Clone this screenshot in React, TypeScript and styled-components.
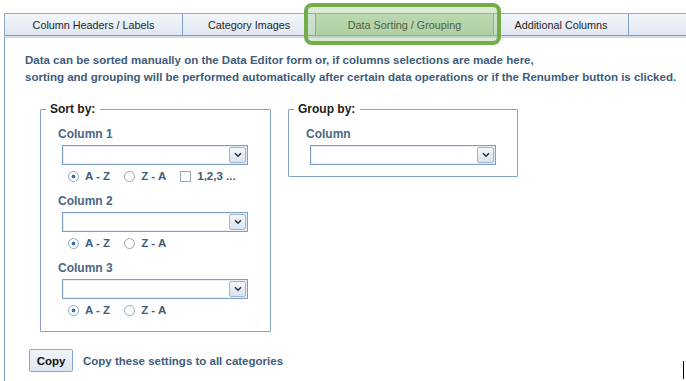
import React from 'react'
import styled, { createGlobalStyle } from 'styled-components'

const GlobalStyle = createGlobalStyle`
    html, body {
        margin: 0;
        padding: 0;
        background: #ffffff;
        font-family: "Liberation Sans", Arial, sans-serif;
    }
`

const tabs = [
    { label: 'Column Headers / Labels', width: 178 },
    { label: 'Category Images', width: 133 },
    { label: 'Data Sorting / Grouping', width: 178, active: true },
    { label: 'Additional Columns', width: 135 },
]

const SortBlock: React.FC<{ title: string; numbered?: boolean }> = ({ title, numbered }) => (
    <Block>
        <FieldLabel>{title}</FieldLabel>
        <Dropdown />
        <Options>
            <Option>
                <Radio $checked />
                A - Z
            </Option>
            <Option>
                <Radio />
                Z - A
            </Option>
            {numbered && (
                <Option>
                    <Check />
                    1,2,3 ...
                </Option>
            )}
        </Options>
    </Block>
)

const Dropdown: React.FC = () => (
    <SelectBox>
        <ArrowButton>
            <svg width='8' height='6' viewBox='0 0 8 6'>
                <path d='M1 1.2 L4 4.2 L7 1.2' fill='none' stroke='#2b3440' strokeWidth='1.6' />
            </svg>
        </ArrowButton>
    </SelectBox>
)

export default function App() {
    return (
        <>
            <GlobalStyle />
            <Frame>
                <TabBar>
                    {tabs.map((tab) => (
                        <Tab key={tab.label} $width={tab.width} $active={tab.active}>
                            {tab.label}
                        </Tab>
                    ))}
                </TabBar>
                <Highlight />
                <Panel>
                    <Intro>
                        Data can be sorted manually on the Data Editor form or, if columns selections are made here,
                        <br />
                        sorting and grouping will be performed automatically after certain data operations or if the Renumber button is clicked.
                    </Intro>
                    <Boxes>
                        <Box $width={231} $bottom={3}>
                            <Legend>Sort by:</Legend>
                            <SortBlock title='Column 1' numbered />
                            <SortBlock title='Column 2' />
                            <SortBlock title='Column 3' />
                        </Box>
                        <Box $width={230} $bottom={0}>
                            <Legend>Group by:</Legend>
                            <Block>
                                <FieldLabel>Column</FieldLabel>
                                <Dropdown />
                            </Block>
                        </Box>
                    </Boxes>
                    <Footer>
                        <CopyButton>Copy</CopyButton>
                        <FooterText>Copy these settings to all categories</FooterText>
                    </Footer>
                </Panel>
                <Caret />
            </Frame>
        </>
    )
}

const Frame = styled.div`
    position: relative;
    width: 686px;
    height: 381px;
    overflow: hidden;
    padding: 13px 0 0 4px;
    box-sizing: border-box;
`

const TabBar = styled.div`
    display: flex;
    height: 21px;
    border-top: 1px solid #8eaad0;
    border-left: 1px solid #8eaad0;
    border-bottom: 1px solid #7f9fc8;
    background: linear-gradient(#f3f6fb, #dfe7f2);
`

const Tab = styled.div<{ $width: number; $active?: boolean }>`
    width: ${({ $width }) => $width}px;
    flex: none;
    display: flex;
    align-items: center;
    justify-content: center;
    box-sizing: border-box;
    border-right: 1px solid #7f9fc8;
    font-size: 10.8px;
    color: #1f1f1f;
    background: ${({ $active }) => ($active ? 'linear-gradient(#cfe3c9, #bfd8b7)' : 'transparent')};
`

const Highlight = styled.div`
    position: absolute;
    left: 304px;
    top: 3px;
    width: 197px;
    height: 42px;
    box-sizing: border-box;
    border: 4px solid #72ad4a;
    border-radius: 8px;
    background: rgba(150, 196, 130, 0.35);
`

const Panel = styled.div`
    height: 345px;
    box-sizing: border-box;
    border-left: 1px solid #7f9fc8;
    border-top: 2px solid #d3dde9;
    padding: 14px 0 0 20px;
`

const Intro = styled.p`
    margin: 0;
    font-size: 11.5px;
    font-weight: bold;
    line-height: 17px;
    color: #3d5b7a;
    white-space: nowrap;
`

const Boxes = styled.div`
    display: flex;
    align-items: flex-start;
    gap: 17px;
    margin: 16px 0 0 15px;
`

const Box = styled.fieldset<{ $width: number; $bottom: number }>`
    width: ${({ $width }) => $width}px;
    box-sizing: border-box;
    margin: 0;
    padding: 11px 0 ${({ $bottom }) => $bottom}px 4px;
    border: 1px solid #85a4c8;
    border-radius: 1px;
`

const Legend = styled.legend`
    margin-left: 1px;
    padding: 0 5px 0 4px;
    font-size: 12px;
    font-weight: bold;
    line-height: 14px;
    color: #1c1c1c;
`

const Block = styled.div`
    display: flex;
    flex-direction: column;
    padding-left: 13px;
    margin-bottom: 11px;
`

const FieldLabel = styled.div`
    font-size: 12px;
    font-weight: bold;
    line-height: 14px;
    color: #4a6784;
`

const SelectBox = styled.div`
    width: 186px;
    height: 20px;
    margin: 4px 0 0 4px;
    box-sizing: border-box;
    display: flex;
    justify-content: flex-end;
    align-items: center;
    padding-right: 1px;
    background: #ffffff;
    border: 1px solid #7f9ec4;
    box-shadow: inset 0 0 0 1px #e6edf6;
`

const ArrowButton = styled.div`
    width: 17px;
    height: 16px;
    box-sizing: border-box;
    display: flex;
    align-items: center;
    justify-content: center;
    border: 1px solid #9fb4cd;
    border-radius: 2px;
    background: linear-gradient(#f4f7fb, #d9e3ef);
`

const Options = styled.div`
    display: flex;
    align-items: center;
    gap: 14px;
    height: 14px;
    margin: 4px 0 0 10px;
`

const Option = styled.label`
    display: flex;
    align-items: center;
    gap: 6px;
    font-size: 11.5px;
    font-weight: bold;
    color: #3d5b7a;
    white-space: nowrap;
`

const Radio = styled.span<{ $checked?: boolean }>`
    width: 11px;
    height: 11px;
    box-sizing: border-box;
    border-radius: 50%;
    border: 1px solid #93a6bd;
    background: ${({ $checked }) =>
        $checked ? 'radial-gradient(circle, #3a6fae 0 1.7px, #ffffff 2.2px)' : '#ffffff'};
`

const Check = styled.span`
    width: 11px;
    height: 11px;
    box-sizing: border-box;
    border: 1px solid #93a6bd;
    background: #ffffff;
`

const Footer = styled.div`
    display: flex;
    align-items: center;
    gap: 10px;
    margin: 17px 0 0 4px;
`

const CopyButton = styled.button`
    width: 44px;
    height: 23px;
    padding: 0;
    font-family: "Liberation Sans", Arial, sans-serif;
    font-size: 11.5px;
    font-weight: bold;
    color: #111111;
    border: 1px solid #87a6cc;
    border-radius: 2px;
    background: linear-gradient(#f1f5fa, #dde6f1);
`

const FooterText = styled.span`
    font-size: 11.5px;
    font-weight: bold;
    color: #3d5b7a;
`

const Caret = styled.div`
    position: absolute;
    left: 683px;
    top: 361px;
    width: 1px;
    height: 18px;
    background: #000000;
`
